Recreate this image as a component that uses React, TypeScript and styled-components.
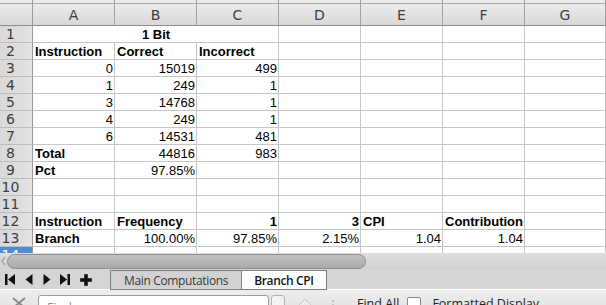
import styled, { createGlobalStyle } from 'styled-components';

type CellData = {
  v?: string;
  b?: boolean;
  a?: 'left' | 'right' | 'center';
  span?: number;
};

const GlobalStyle = createGlobalStyle`
  html, body {
    margin: 0;
    padding: 0;
    background: #ffffff;
  }
  body {
    width: 606px;
    height: 305px;
    overflow: hidden;
  }
`;

const Frame = styled.div`
  width: 606px;
  height: 305px;
  display: flex;
  flex-direction: column;
  overflow: hidden;
  background: #e6e6e6;
`;

const Sheet = styled.div`
  flex: none;
  height: 253px;
  overflow: hidden;
  display: grid;
  grid-template-columns: 33px repeat(6, 82px) 1fr;
  grid-template-rows: 26px;
  grid-auto-rows: 17px;
  background: #ffffff;
`;

const ColHeader = styled.div<{ $corner?: boolean }>`
  box-sizing: border-box;
  height: 26px;
  padding-top: 4px;
  display: flex;
  align-items: center;
  justify-content: center;
  border-bottom: 1px solid #8e8e8e;
  border-right: 1px solid ${(p) => (p.$corner ? '#9a9a9a' : '#a2a2a2')};
  background: linear-gradient(
    to bottom,
    #ebebeb 0px,
    #ebebeb 3px,
    #ababab 3px,
    #ababab 4px,
    #ececec 4px,
    #d8d8d8 100%
  );
  font-family: 'DejaVu Sans', 'Liberation Sans', sans-serif;
  font-size: 14px;
  color: #3e3e3e;
`;

const RowHeader = styled.div<{ $selected?: boolean }>`
  box-sizing: border-box;
  display: flex;
  align-items: center;
  justify-content: center;
  padding-right: 11px;
  border-right: 1px solid #9a9a9a;
  border-bottom: 1px solid #bdbdbd;
  background: ${(p) =>
    p.$selected
      ? '#4f8ad3'
      : 'linear-gradient(to right, #d9d9d9, #dedede 70%, #e6e6e6)'};
  font-family: 'DejaVu Sans', 'Liberation Sans', sans-serif;
  font-size: 14px;
  color: ${(p) => (p.$selected ? '#ffffff' : '#3e3e3e')};
`;

const Cell = styled.div<{ $bold?: boolean; $align?: string; $span?: number }>`
  box-sizing: border-box;
  grid-column: span ${(p) => p.$span || 1};
  padding: 1px 1px 0 2px;
  border-right: 1px solid #c6c6c6;
  border-bottom: 1px solid #c6c6c6;
  font-family: 'Liberation Sans', Arial, sans-serif;
  font-size: 13px;
  line-height: 16px;
  font-weight: ${(p) => (p.$bold ? 700 : 400)};
  text-align: ${(p) => p.$align || 'left'};
  color: #000000;
  white-space: nowrap;
`;

const ScrollRow = styled.div`
  flex: none;
  height: 16px;
  display: flex;
  align-items: center;
  background: linear-gradient(to bottom, #dedede, #d2d2d2);
`;

const Grip = styled.div`
  width: 7px;
  display: flex;
  justify-content: center;
`;

const Thumb = styled.div`
  box-sizing: border-box;
  width: 359px;
  height: 15px;
  border: 1px solid #8e8e8e;
  border-radius: 8px;
  background: linear-gradient(to bottom, #c2c2c2, #a9a9a9);
`;

const TabBar = styled.div`
  flex: none;
  height: 21px;
  box-sizing: border-box;
  padding-top: 1px;
  display: flex;
  background: #d5d5d5;
  border-bottom: 1px solid #ffffff;
`;

const Nav = styled.div`
  width: 110px;
  display: flex;
  align-items: center;
`;

const NavButton = styled.div<{ $w: number }>`
  width: ${(p) => p.$w}px;
  display: flex;
  justify-content: center;
`;

const Tab = styled.div<{ $active?: boolean }>`
  box-sizing: border-box;
  height: 20px;
  padding: 0 ${(p) => (p.$active ? '12px' : '13px')};
  display: flex;
  align-items: center;
  border: 1px solid #7f7f7f;
  border-left-width: ${(p) => (p.$active ? 0 : 1)}px;
  background: ${(p) => (p.$active ? '#ffffff' : '#d2d2d2')};
  font-family: 'Open Sans', 'Noto Sans', sans-serif;
  font-size: 12px;
  letter-spacing: -0.35px;
  color: ${(p) => (p.$active ? '#141414' : '#3a3a3a')};
  font-weight: ${(p) => (p.$active ? 600 : 400)};
`;

const FindBar = styled.div`
  flex: 1;
  display: flex;
  align-items: flex-start;
  padding-top: 5px;
  background: linear-gradient(to bottom, #ededed, #e2e2e2);
  font-family: 'Open Sans', 'Noto Sans', sans-serif;
  font-size: 12.5px;
  color: #262626;
`;

const CloseIcon = styled.div`
  width: 38px;
  padding-top: 2px;
  display: flex;
  justify-content: center;
`;

const SearchBox = styled.div`
  box-sizing: border-box;
  width: 231px;
  height: 20px;
  padding: 3px 8px;
  border: 1px solid #9c9c9c;
  border-radius: 3px;
  background: #ffffff;
  color: #8e8e8e;
`;

const DropButton = styled.div`
  box-sizing: border-box;
  width: 14px;
  height: 20px;
  margin-left: 2px;
  border: 1px solid #b2b2b2;
  border-radius: 3px;
  background: #f3f3f3;
`;

const ArrowSlot = styled.div<{ $w: number }>`
  width: ${(p) => p.$w}px;
  padding-top: 2px;
  display: flex;
  justify-content: center;
`;

const Label = styled.span<{ $ml: number }>`
  margin-left: ${(p) => p.$ml}px;
  padding-top: 0;
  white-space: nowrap;
`;

const Check = styled.div`
  box-sizing: border-box;
  width: 14px;
  height: 14px;
  margin: 2px 0 0 8px;
  border: 1px solid #8a8a8a;
  border-radius: 2px;
  background: #ffffff;
`;

const B = (v: string): CellData => ({ v, b: true });
const R = (v: string, b = false): CellData => ({ v, a: 'right', b });
const E: CellData = {};

const rows: CellData[][] = [
  [{ v: '1 Bit', b: true, a: 'center', span: 3 }, E, E, E, E],
  [B('Instruction'), B('Correct'), B('Incorrect'), E, E, E, E],
  [R('0'), R('15019'), R('499'), E, E, E, E],
  [R('1'), R('249'), R('1'), E, E, E, E],
  [R('3'), R('14768'), R('1'), E, E, E, E],
  [R('4'), R('249'), R('1'), E, E, E, E],
  [R('6'), R('14531'), R('481'), E, E, E, E],
  [B('Total'), R('44816'), R('983'), E, E, E, E],
  [B('Pct'), R('97.85%'), E, E, E, E, E],
  [E, E, E, E, E, E, E],
  [E, E, E, E, E, E, E],
  [B('Instruction'), B('Frequency'), R('1', true), R('3', true), B('CPI'), B('Contribution'), E],
  [B('Branch'), R('100.00%'), R('97.85%'), R('2.15%'), R('1.04'), R('1.04'), E],
  [E, E, E, E, E, E, E],
];

const letters = ['A', 'B', 'C', 'D', 'E', 'F', 'G'];

export default function App() {
  return (
    <Frame>
      <GlobalStyle />
      <Sheet>
        <ColHeader $corner />
        {letters.map((l) => (
          <ColHeader key={l}>{l}</ColHeader>
        ))}
        {rows.map((row, i) => [
          <RowHeader key={'h' + i} $selected={i === 13}>
            {i + 1}
          </RowHeader>,
          ...row.map((c, j) => (
            <Cell key={i + '-' + j} $bold={c.b} $align={c.a} $span={c.span}>
              {c.v}
            </Cell>
          )),
        ])}
      </Sheet>

      <ScrollRow>
        <Grip>
          <svg width='5' height='8' viewBox='0 0 5 8'>
            <path d='M4 0 L1 4 L4 8' fill='none' stroke='#9a9a9a' strokeWidth='1.2' />
          </svg>
        </Grip>
        <Thumb />
      </ScrollRow>

      <TabBar>
        <Nav>
          <NavButton $w={20}>
            <svg width='10' height='11' viewBox='0 0 10 11'>
              <rect x='0' y='0' width='2.5' height='11' fill='#111' />
              <path d='M10 0 L3 5.5 L10 11 Z' fill='#111' />
            </svg>
          </NavButton>
          <NavButton $w={18}>
            <svg width='8' height='11' viewBox='0 0 8 11'>
              <path d='M7.5 0 L0.5 5.5 L7.5 11 Z' fill='#111' />
            </svg>
          </NavButton>
          <NavButton $w={18}>
            <svg width='8' height='11' viewBox='0 0 8 11'>
              <path d='M0.5 0 L7.5 5.5 L0.5 11 Z' fill='#111' />
            </svg>
          </NavButton>
          <NavButton $w={18}>
            <svg width='10' height='11' viewBox='0 0 10 11'>
              <path d='M0 0 L7 5.5 L0 11 Z' fill='#111' />
              <rect x='7.5' y='0' width='2.5' height='11' fill='#111' />
            </svg>
          </NavButton>
          <NavButton $w={24}>
            <svg width='12' height='12' viewBox='0 0 12 12'>
              <path
                d='M4.5 0.5 H7.5 V4.5 H11.5 V7.5 H7.5 V11.5 H4.5 V7.5 H0.5 V4.5 H4.5 Z'
                fill='#111'
                stroke='#111'
                strokeWidth='0.6'
                strokeLinejoin='round'
              />
            </svg>
          </NavButton>
        </Nav>
        <Tab>Main Computations</Tab>
        <Tab $active>Branch CPI</Tab>
      </TabBar>

      <FindBar>
        <CloseIcon>
          <svg width='14' height='12' viewBox='0 0 14 12'>
            <path d='M1 1 L13 11 M13 1 L1 11' stroke='#8c8c8c' strokeWidth='2' fill='none' />
          </svg>
        </CloseIcon>
        <SearchBox>Find</SearchBox>
        <DropButton />
        <ArrowSlot $w={40}>
          <svg width='16' height='10' viewBox='0 0 16 10'>
            <path d='M1 9 L8 2 L15 9 Z' fill='#ececec' stroke='#c8c8c8' strokeWidth='1' />
          </svg>
        </ArrowSlot>
        <ArrowSlot $w={16}>
          <svg width='4' height='10' viewBox='0 0 4 10'>
            <circle cx='2' cy='4' r='1.2' fill='#c4c4c4' />
            <circle cx='2' cy='8' r='1.2' fill='#c4c4c4' />
          </svg>
        </ArrowSlot>
        <Label $ml={16}>Find All</Label>
        <Check />
        <Label $ml={11}>Formatted Display</Label>
      </FindBar>
    </Frame>
  );
}
